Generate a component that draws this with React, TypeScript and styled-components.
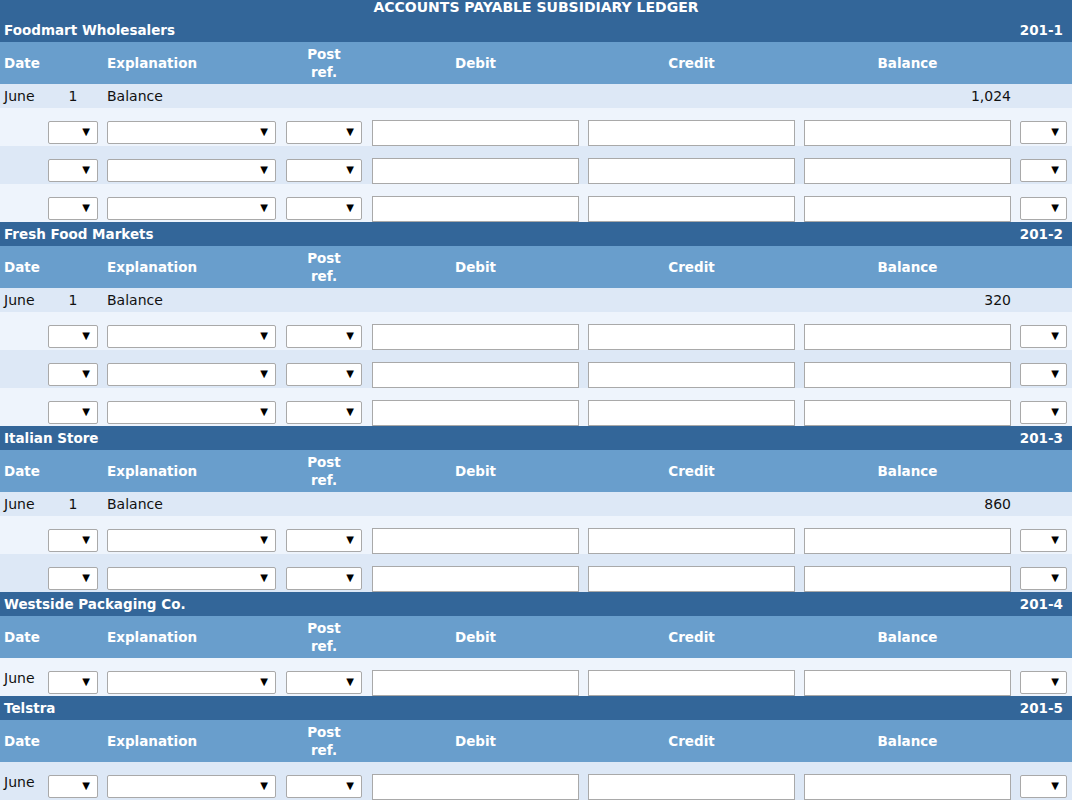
import React from 'react'
import styled, { createGlobalStyle } from 'styled-components'

const GlobalStyle = createGlobalStyle`
  body {
    margin: 0;
    background: #fff;
    font-family: "DejaVu Sans", Verdana, sans-serif;
  }
`

const COLS = '48px 59px 179px 86px 216px 216px 216px 52px'

const Page = styled.div`
  width: 1072px;
`

const Title = styled.div`
  background: #336699;
  color: #fff;
  font-weight: bold;
  font-size: 14px;
  text-align: center;
  height: 18px;
  line-height: 15px;
`

const AccountBar = styled.div`
  display: flex;
  justify-content: space-between;
  align-items: center;
  background: #336699;
  color: #fff;
  font-weight: bold;
  font-size: 13.5px;
  height: 24px;
  padding: 0 9px 0 4px;
`

const HeaderRow = styled.div`
  display: grid;
  grid-template-columns: ${COLS};
  align-items: center;
  height: 42px;
  background: #699ecc;
  color: #fff;
  font-weight: bold;
  font-size: 13.5px;
`

const HeadCell = styled.div<{ $span?: number; $pad?: number }>`
  grid-column: span ${p => p.$span ?? 1};
  padding-left: ${p => p.$pad ?? 0}px;
  line-height: 18px;
`

const CenterCell = styled.div<{ $w: number }>`
  width: ${p => p.$w}px;
  text-align: center;
`

const Row = styled.div<{ $shade: boolean; $h: number; $entry?: boolean }>`
  display: grid;
  grid-template-columns: ${COLS};
  align-items: ${p => (p.$entry ? 'end' : 'center')};
  height: ${p => p.$h}px;
  box-sizing: border-box;
  background: ${p => (p.$shade ? '#dde8f6' : '#eef4fc')};
  color: #111;
  font-size: 14px;
`

const TextCell = styled.div<{ $align?: string; $pad?: number; $padRight?: number; $w?: number; $span?: number }>`
  grid-column: span ${p => p.$span ?? 1};
  text-align: ${p => p.$align ?? 'left'};
  padding-left: ${p => p.$pad ?? 0}px;
  padding-right: ${p => p.$padRight ?? 0}px;
  ${p => (p.$w ? `width: ${p.$w}px;` : '')}
`

const MonthCell = styled.div`
  align-self: center;
  padding-left: 4px;
  margin-top: 1px;
`

const SelectWrap = styled.div<{ $w: number }>`
  position: relative;
  width: ${p => p.$w}px;
  height: 23px;
  margin-bottom: 2px;
  &::after {
    content: '▼';
    position: absolute;
    right: 8px;
    top: 5px;
    font-size: 10px;
    line-height: 12px;
    color: #000;
    pointer-events: none;
  }
`

const Select = styled.select`
  appearance: none;
  width: 100%;
  height: 100%;
  box-sizing: border-box;
  border: 1px solid #a9a9a9;
  border-radius: 2px;
  background: #fff;
  margin: 0;
  padding: 0 4px;
  font-family: inherit;
  font-size: 13px;
`

const Input = styled.input`
  display: block;
  width: 207px;
  height: 26px;
  box-sizing: border-box;
  border: 1px solid #a9a9a9;
  background: #fff;
  margin: 0;
  padding: 0 4px;
  font-family: inherit;
  font-size: 13px;
`

const Drop = ({ w }: { w: number }) => (
  <SelectWrap $w={w}>
    <Select defaultValue="">
      <option value="" />
    </Select>
  </SelectWrap>
)

const Header = () => (
  <HeaderRow>
    <HeadCell $span={2} $pad={4}>Date</HeadCell>
    <HeadCell>Explanation</HeadCell>
    <HeadCell><CenterCell $w={76}>Post<br />ref.</CenterCell></HeadCell>
    <HeadCell><CenterCell $w={207}>Debit</CenterCell></HeadCell>
    <HeadCell><CenterCell $w={207}>Credit</CenterCell></HeadCell>
    <HeadCell><CenterCell $w={207}>Balance</CenterCell></HeadCell>
    <HeadCell />
  </HeaderRow>
)

const EntryRow = (props: { shade: boolean; month?: boolean }) => (
  <Row $shade={props.shade} $h={38} $entry>
    {props.month ? <MonthCell>June</MonthCell> : <div />}
    <Drop w={50} />
    <Drop w={169} />
    <Drop w={76} />
    <Input />
    <Input />
    <Input />
    <Drop w={47} />
  </Row>
)

type Account = { name: string; code: string; balance?: string; rows: number }

const accounts: Account[] = [
  { name: 'Foodmart Wholesalers', code: '201-1', balance: '1,024', rows: 3 },
  { name: 'Fresh Food Markets', code: '201-2', balance: '320', rows: 3 },
  { name: 'Italian Store', code: '201-3', balance: '860', rows: 2 },
  { name: 'Westside Packaging Co.', code: '201-4', rows: 1 },
  { name: 'Telstra', code: '201-5', rows: 1 },
]

const Ledger = ({ account, index }: { account: Account; index: number }) => (
  <>
    <AccountBar>
      <span>{account.name}</span>
      <span>{account.code}</span>
    </AccountBar>
    <Header />
    {account.balance && (
      <Row $shade $h={24}>
        <TextCell $pad={4}>June</TextCell>
        <TextCell $align="center" $w={50}>1</TextCell>
        <TextCell>Balance</TextCell>
        <TextCell $span={4} $align="right" $padRight={9}>{account.balance}</TextCell>
        <div />
      </Row>
    )}
    {Array.from({ length: account.rows }).map((_, i) => (
      <EntryRow
        key={i}
        shade={account.balance ? i % 2 === 1 : index === 4}
        month={!account.balance}
      />
    ))}
  </>
)

const App = () => (
  <Page>
    <GlobalStyle />
    <Title>ACCOUNTS PAYABLE SUBSIDIARY LEDGER</Title>
    {accounts.map((a, i) => (
      <Ledger key={a.code} account={a} index={i} />
    ))}
  </Page>
)

export default App
